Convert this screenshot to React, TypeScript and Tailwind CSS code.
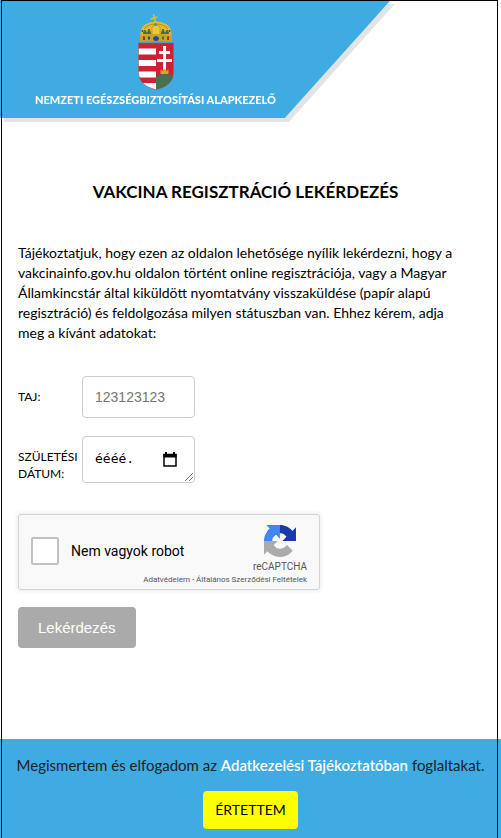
import React, { useState } from 'react';

const CoatOfArms: React.FC = () => (
  <svg viewBox="0 0 36 76" className="h-[76px] w-9" role="img" aria-label="Magyarország címere">
    <defs>
      <clipPath id="shield">
        <path d="M.5 29H35.500V58C35.500 68 28 73.500 18 75.500C8 73.500.5 68 .5 58Z" />
      </clipPath>
    </defs>

    {/* pajzs */}
    <g clipPath="url(#shield)">
      <rect y="29" width="36" height="47" fill="#cd2134" />
      <rect y="34.500" width="18" height="6" fill="#fff" />
      <rect y="46" width="18" height="6" fill="#fff" />
      <rect y="57.500" width="18" height="6" fill="#fff" />
      <rect y="69" width="18" height="7" fill="#fff" />
      <path d="M18 63Q21 60 27 60Q33 60 36 63V76H18Z" fill="#46704e" />
      <path d="M25 32h3v5h4v3h-4v5h6v3h-6v9h-3v-9h-6v-3h6v-5h-4v-3h4Z" fill="#fff" />
      <path d="M22.500 60v-4.500l2 1.500 2-2.500 2 2.500 2-1.500V60Z" fill="#d9a521" />
    </g>
    <path d="M.5 29H35.500V58C35.500 68 28 73.500 18 75.500C8 73.500.5 68 .5 58Z" fill="none" stroke="#8d6a55" strokeWidth=".5" />

    {/* korona */}
    <path d="M2.500 22Q2 14 7 10.500Q12 7.500 18 7.500Q24 7.500 29 10.500Q34 14 33.500 22Z" fill="#e3bc2e" />
    <path d="M5 20l2-4 2 4 2-5 2 5M23 20l2-5 2 5 2-4 2 4" fill="#3f7045" stroke="#3f7045" />
    <path d="M14 21V13Q18 9 22 13V21Z" fill="#ebc836" stroke="#ad831f" strokeWidth=".6" />
    <path d="M6 15Q10 10 18 10Q26 10 30 15" fill="none" stroke="#a27b24" strokeWidth=".7" />
    <path d="M2 21Q18 19 34 21V28Q18 26 2 28Z" fill="#cf9f27" />
    <path d="M15 24Q18 20 21 24Q21 27 18 27Q15 27 15 24Z" fill="#27479a" />
    <rect x="5" y="22.500" width="2" height="3.500" fill="#a8272a" />
    <rect x="10" y="22.500" width="2" height="3" fill="#27479a" />
    <rect x="24" y="22.500" width="2" height="3" fill="#3f7045" />
    <rect x="29" y="22.500" width="2" height="3.500" fill="#a8272a" />
    <circle cx="4.500" cy="17" r="1" fill="#27479a" />
    <circle cx="31.500" cy="17" r="1" fill="#27479a" />
    <circle cx="17.500" cy="10.500" r="1.200" fill="#4d78b5" />
    <path d="M17.500 8L15.500.8M13 5l6-2" stroke="#e3bc2e" strokeWidth="1.500" strokeLinecap="round" />
  </svg>
);

const RecaptchaLogo: React.FC = () => (
  <svg viewBox="0 0 64 64" className="h-8 w-8" aria-hidden="true">
    <path
      fill="#1c3aa9"
      d="M64 31.955l-.033-1.370V4.687l-7.160 7.160C50.948 4.674 42.033.093 32.050.093c-10.400 0-19.622 4.960-25.458 12.640l11.736 11.860a15.550 15.550 0 0 1 4.754-5.334c2.050-1.600 4.952-2.906 8.968-2.906.485 0 .860.057 1.135.163 4.976.393 9.288 3.140 11.828 7.124l-8.307 8.307L64 31.953"
    />
    <path
      fill="#4285f4"
      d="M31.862.094l-1.370.033H4.594l7.160 7.160C4.580 13.147 0 22.060 0 32.046c0 10.400 4.960 19.622 12.640 25.458L24.500 45.768a15.550 15.550 0 0 1-5.334-4.754c-1.600-2.050-2.906-4.952-2.906-8.968 0-.485.057-.860.163-1.135.393-4.976 3.140-9.288 7.124-11.828l8.307 8.307L31.860.095"
    />
    <path
      fill="#ababab"
      d="M.001 32.045l.033 1.370v25.898l7.160-7.160c5.860 7.173 14.774 11.754 24.760 11.754 10.400 0 19.622-4.960 25.458-12.640l-11.736-11.860a15.550 15.550 0 0 1-4.754 5.334c-2.050 1.600-4.952 2.906-8.968 2.906-.485 0-.860-.057-1.135-.163-4.976-.393-9.288-3.140-11.828-7.124l8.307-8.307c-10.522.040-22.400.066-27.295-.005"
    />
  </svg>
);

const App: React.FC = () => {
  const [taj, setTaj] = useState('');
  const [birthDate, setBirthDate] = useState('');
  const [notRobot, setNotRobot] = useState(false);

  return (
    <div className="relative flex min-h-screen flex-col bg-white font-[Lato,'Liberation_Sans',sans-serif] text-sm text-black">
      {/* keret */}
      <div className="pointer-events-none absolute inset-y-0 left-px right-[3px] z-10 border-x border-t border-black" />

      <header className="drop-shadow-[4px_4px_0_#e3e3e3]">
        <div className="w-[78%] bg-[#3eabe3] pt-3.5 pb-2 [clip-path:polygon(0_0,100%_0,calc(100%-106px)_100%,0_100%)]">
          <div className="flex w-[311px] flex-col items-center">
            <CoatOfArms />
            <span className="text-[11px] leading-5 font-black whitespace-nowrap text-white">
              NEMZETI EGÉSZSÉGBIZTOSÍTÁSI ALAPKEZELŐ
            </span>
          </div>
        </div>
      </header>

      <main className="pr-7 pl-[18px]">
        <h1 className="mt-[62px] text-center text-[17px] leading-6 font-bold">VAKCINA REGISZTRÁCIÓ LEKÉRDEZÉS</h1>

        <p className="mt-[39px] leading-5">
          Tájékoztatjuk, hogy ezen az oldalon lehetősége nyílik lekérdezni, hogy a vakcinainfo.gov.hu oldalon
          történt online regisztrációja, vagy a Magyar Államkincstár által kiküldött nyomtatvány visszaküldése
          (papír alapú regisztráció) és feldolgozása milyen státuszban van. Ehhez kérem, adja meg a kívánt
          adatokat:
        </p>

        <form onSubmit={(e) => e.preventDefault()}>
          <div className="mt-[33px] grid grid-cols-[64px_113px] items-center gap-y-[18px]">
            <label htmlFor="taj" className="text-xs">TAJ:</label>
            <input
              id="taj"
              type="text"
              value={taj}
              onChange={(e) => setTaj(e.target.value)}
              placeholder="123123123"
              className="h-[42px] rounded border border-[#ccc] px-3 font-['Liberation_Sans',Arial,sans-serif] text-sm placeholder-[#757575]"
            />

            <label htmlFor="szuletes" className="pt-2.5 text-xs leading-[17px]">SZÜLETÉSI DÁTUM:</label>
            <div className="relative flex h-[47px] items-center rounded border border-[#ccc] pr-4 pl-3">
              <input
                id="szuletes"
                type="text"
                value={birthDate}
                onChange={(e) => setBirthDate(e.target.value)}
                placeholder="éééé."
                className="min-w-0 flex-1 font-['DejaVu_Sans_Mono','Liberation_Mono',monospace] text-[13px] outline-none placeholder-black"
              />
              <button type="button" aria-label="Naptár megnyitása">
                <svg viewBox="0 0 16 16" className="h-4 w-4" aria-hidden="true">
                  <path d="M4 0v3M12 0v3" stroke="#000" strokeWidth="2" />
                  <path d="M2 2.500h12v11.500h-12z" fill="none" stroke="#000" strokeWidth="1.500" />
                  <path d="M1.500 2h13v3.500h-13z" />
                </svg>
              </button>
              <svg viewBox="0 0 10 10" className="absolute right-0 bottom-0 h-2.5 w-2.5" aria-hidden="true">
                <path d="M1 9l8-8M5 9l4-4" stroke="#555" strokeWidth=".8" />
              </svg>
            </div>
          </div>

          {/* reCAPTCHA */}
          <div className="mt-[31px] h-[76px] w-[302px] rounded-[3px] border border-[#d3d3d3] bg-[#f9f9f9] px-3 pt-2.5 font-[Roboto,sans-serif] shadow-[0_0_4px_1px_rgba(0,0,0,0.08)]">
            <div className="flex items-center justify-between">
              <div className="flex items-center pt-0.5">
                <input
                  id="robot"
                  type="checkbox"
                  checked={notRobot}
                  onChange={(e) => setNotRobot(e.target.checked)}
                  className="h-7 w-7 appearance-none rounded-xs border-2 border-[#c1c1c1] bg-white checked:bg-[#4285f4]"
                />
                <label htmlFor="robot" className="pl-3 text-sm">Nem vagyok robot</label>
              </div>
              <div className="flex flex-col items-center text-[#555]">
                <RecaptchaLogo />
                <span className="mt-0.5 text-[10px] leading-4">reCAPTCHA</span>
              </div>
            </div>
            <div className="text-right text-[8px] leading-[10px] text-[#555]">
              <a href="#adatvedelem">Adatvédelem</a> - <a href="#feltetelek">Általános Szerződési Feltételek</a>
            </div>
          </div>

          <button
            type="submit"
            className="mt-[17px] h-[41px] rounded bg-[#aaa] px-5 font-['Liberation_Sans',Arial,sans-serif] text-[15px] text-white"
          >
            Lekérdezés
          </button>
        </form>
      </main>

      <footer className="mt-auto flex flex-col items-center bg-[#3eabe3] pt-4 pb-[9px] text-[#222]">
        <p className="text-[15px] leading-5">
          Megismertem és elfogadom az{' '}
          <a href="#tajekoztato" className="font-semibold text-white">Adatkezelési Tájékoztatóban</a> foglaltakat.
        </p>
        <button type="button" className="mt-4 h-[38px] rounded bg-[#ff0] px-3 text-sm text-black">
          ÉRTETTEM
        </button>
      </footer>
    </div>
  );
};

export default App;
